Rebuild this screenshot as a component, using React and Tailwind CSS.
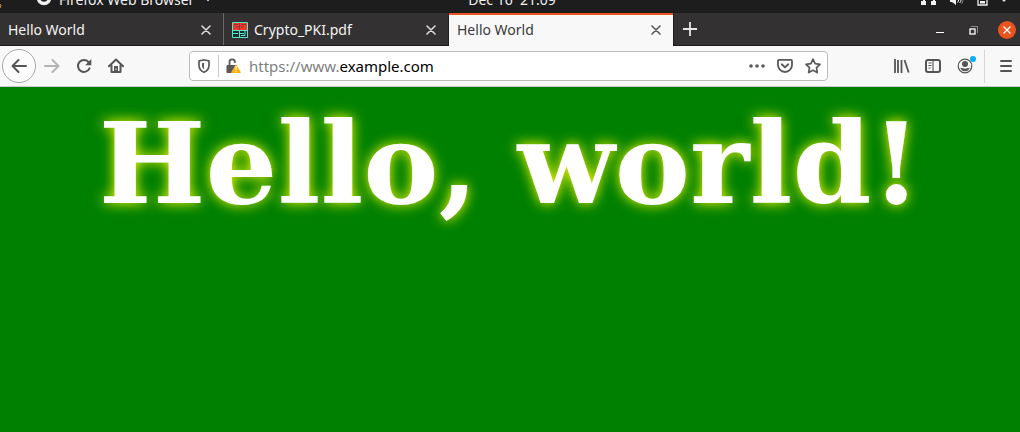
import React from "react";

function CloseGlyph() {
  return (
    <svg width="10" height="10" viewBox="0 0 10 10" fill="none" stroke="currentColor" strokeWidth="1.6" strokeLinecap="round" aria-hidden="true">
      <path d="M1 1l8 8M9 1L1 9" />
    </svg>
  );
}

function PdfFavicon() {
  return (
    <svg width="16" height="16" viewBox="0 0 16 16" aria-hidden="true">
      <rect width="16" height="16" fill="#16302f" />
      <rect x="1" y="1" width="14" height="7" fill="#ef3a2d" />
      <path d="M2 2.500h4M3 5h4M9 2.500h5M9 5h3M7.500 1v7" stroke="#8c3a33" strokeWidth="1" fill="none" />
      <path d="M.5 .5h15v15H.5zM1 8.500h14M7.500 9v6M1 11.500h5M8 11.500h4M13 9v4.500H9" stroke="#5fe3c8" strokeWidth="1" fill="none" />
    </svg>
  );
}

function SystemBar() {
  return (
    <div className="flex h-[13px] items-end justify-between overflow-hidden bg-[#1d1d1d] text-[14px] leading-5 text-[#f0f0f0]">
      <div className="flex w-1/3 items-end pb-[3px]">
        <svg className="mr-9 shrink-0" width="2" height="12" viewBox="0 0 2 12" aria-hidden="true">
          <path d="M0 6q2 1 0 4" stroke="#e8963c" fill="none" />
        </svg>
        <div className="flex items-end gap-1.5">
          <svg className="mb-1 shrink-0 overflow-visible" width="15" height="15" viewBox="0 0 15 15" aria-hidden="true">
            <circle cx="6" cy="7" r="5.500" stroke="#f0f0f0" strokeWidth="3.500" fill="none" />
          </svg>
          <span className="whitespace-nowrap">Firefox Web Browser</span>
          <svg className="mb-2 ml-1 shrink-0 overflow-visible" width="8" height="5" viewBox="0 0 8 5" aria-hidden="true">
            <path d="M0 0h8L4 4.500z" fill="#d8d8d8" />
          </svg>
        </div>
      </div>
      <span className="whitespace-pre pb-[3px] pl-1">Dec 16  21:09</span>
      <div className="flex w-1/3 items-start justify-end gap-3 self-start pr-3 text-[#f0f0f0]">
        <svg width="16" height="6" viewBox="0 0 16 6" fill="currentColor" aria-hidden="true">
          <path d="M2 0h2v1h1v4H0V1h2zM12 0h2v1h1v4h-5V1h2z" />
        </svg>
        <svg width="16" height="6" viewBox="0 0 16 6" fill="none" stroke="currentColor" aria-hidden="true">
          <path d="M1 0h6v5L3 2H1z" fill="currentColor" stroke="none" />
          <path d="M9.500 0v1l-1 1.500M12 0q0 2-1.500 3" />
          <path d="M14 0q0 2-1.500 4" stroke="#777" />
        </svg>
        <svg width="11" height="6" viewBox="0 0 11 6" fill="none" stroke="currentColor" aria-hidden="true">
          <path d="M1 0v5h9V0" strokeWidth="1.300" />
          <path d="M3 1h5v2.500H3z" fill="currentColor" stroke="none" />
        </svg>
        <svg width="8" height="3" viewBox="0 0 8 3" fill="#d8d8d8" aria-hidden="true">
          <path d="M2 0h4L4 2z" />
        </svg>
      </div>
    </div>
  );
}

function Tab({ title, icon, active, className }) {
  return (
    <div
      className={
        "flex items-center gap-1.5 pl-2 pr-3 " +
        (active ? "border-t-2 border-[#e95420] bg-[#f8f8f8] pb-0.5 text-[#3b3b3b] " : "pt-0.5 text-[#f4f4f4] ") +
        className
      }
    >
      <button role="tab" aria-selected={!!active} className="flex flex-1 items-center gap-1.5 text-left leading-5">
        {icon}
        <span>{title}</span>
      </button>
      <button aria-label={"Close " + title} className={active ? "text-[#555]" : "text-[#dcdcdc]"}>
        <CloseGlyph />
      </button>
    </div>
  );
}

function TabStrip() {
  return (
    <div className="flex h-[33px] border-b border-[#1d1b1c] bg-[#333132] text-[14px]">
      <div role="tablist" className="flex">
        <Tab title="Hello World" className="w-[224px] border-r border-[#6a6869]" />
        <Tab title="Crypto_PKI.pdf" icon={<PdfFavicon />} className="w-[225px] border-r border-[#1f1d1e]" />
        <Tab title="Hello World" active className="-mb-px w-[224px]" />
      </div>
      <button aria-label="New tab" className="border-l border-[#1f1d1e] pl-[9px] text-[#e6e6e6]">
        <svg width="14" height="14" viewBox="0 0 14 14" fill="none" stroke="currentColor" strokeWidth="1.800" aria-hidden="true">
          <path d="M7 0v14M0 7h14" />
        </svg>
      </button>
      <div className="ml-auto flex items-center pr-1 pt-0.5 text-white">
        <button aria-label="Minimize" className="mr-[25px]">
          <svg width="8" height="10" viewBox="0 0 8 10" aria-hidden="true">
            <path d="M0 7.500h8" stroke="currentColor" />
          </svg>
        </button>
        <button aria-label="Restore" className="mr-5">
          <svg width="9" height="9" viewBox="0 0 9 9" fill="none" aria-hidden="true">
            <path d="M2 .5h6.500V7" stroke="#8b898a" />
            <rect x="1" y="3" width="5" height="5" stroke="currentColor" strokeWidth="1.300" />
          </svg>
        </button>
        <button aria-label="Close window" className="flex size-[18px] items-center justify-center rounded-full bg-[#e95420]">
          <svg width="8" height="8" viewBox="0 0 8 8" stroke="currentColor" strokeWidth="1.300" aria-hidden="true">
            <path d="M.5 .5l7 7M7.500 .5l-7 7" />
          </svg>
        </button>
      </div>
    </div>
  );
}

function Glyph({ children, className = "" }) {
  return (
    <svg
      className={"shrink-0 overflow-visible " + className}
      width="16"
      height="16"
      viewBox="0 0 16 16"
      fill="none"
      stroke="currentColor"
      strokeWidth="2"
      strokeLinecap="round"
      strokeLinejoin="round"
      aria-hidden="true"
    >
      {children}
    </svg>
  );
}

function AddressBar() {
  return (
    <div className="flex h-[30px] w-[639px] items-center rounded-[4px] border border-[#bdbdbd] bg-white px-1.5 text-[#595959]">
      <button aria-label="Tracking protection">
        <Glyph>
          <path d="M8 1.800C6.500 2.300 4.800 2.800 3 2.900V7c0 3.500 1.800 6 5 7.300 3.200-1.300 5-3.800 5-7.300V2.900C11.200 2.800 9.500 2.300 8 1.800z" strokeWidth="1.700" />
          <path d="M8 4.800v6.500C6.500 10.300 6 8.700 6 7V5.200z" fill="currentColor" stroke="none" />
        </Glyph>
      </button>
      <span className="mx-1.5 h-[22px] w-px bg-[#c8c8c8]" />
      <button aria-label="Connection not secure">
        <Glyph>
          <path d="M4.500 6.500V4.200a2.700 2.700 0 0 1 5.400-.4v.4" strokeWidth="1.800" />
          <path d="M2.500 7h8.500L6.500 15H2.500a1 1 0 0 1-1-1V8a1 1 0 0 1 1-1z" fill="currentColor" stroke="none" />
          <path d="M11 7.400l4 7H7z" fill="#ffad0d" stroke="#ffad0d" strokeWidth="1.400" />
          <path d="M11 8.500v3.200M11 13.600v.2" stroke="#fff" strokeWidth="1.200" />
        </Glyph>
      </button>
      <div className="relative ml-2 flex-1 text-[15px] leading-5">
        <div aria-hidden="true" className="whitespace-nowrap text-[#808080]">
          https://www.<span className="text-black">example.com</span>
        </div>
        <input
          aria-label="Address"
          defaultValue="https://www.example.com"
          className="absolute inset-0 w-full bg-transparent text-transparent outline-none"
        />
      </div>
      <div className="flex items-center gap-3">
        <button aria-label="Page actions">
          <Glyph>
            <path d="M2 8h.01M8 8h.01M14 8h.01" strokeWidth="3.600" />
          </Glyph>
        </button>
        <button aria-label="Save to Pocket">
          <Glyph>
            <path d="M2 1.900h12a1 1 0 0 1 1 1V7A7 7 0 0 1 1 7V2.900a1 1 0 0 1 1-1z" strokeWidth="1.800" />
            <path d="M4.800 6.300L8 9.400l3.200-3.100" strokeWidth="1.900" />
          </Glyph>
        </button>
        <button aria-label="Bookmark this page">
          <Glyph>
            <path d="M8 1.200l2.100 4.400 4.900.7-3.500 3.400.8 4.900L8 12.300l-4.300 2.300.8-4.900L1 6.300l4.900-.7z" strokeWidth="1.700" />
          </Glyph>
        </button>
      </div>
    </div>
  );
}

function Toolbar() {
  return (
    <div className="flex h-[41px] items-center justify-between border-b border-[#c9c9c9] bg-[#f8f8f8] text-[#555]">
      <div className="flex w-[189px] items-center pl-[2px]">
        <button aria-label="Back" className="flex size-[34px] items-center justify-center rounded-full border border-[#a8a8a8] bg-[#fcfcfc]">
          <Glyph>
            <path d="M15 8H1.500M7.500 2L1.500 8l6 6" />
          </Glyph>
        </button>
        <div className="flex items-center gap-4 pl-2">
          <button aria-label="Forward" disabled className="text-[#b4b4b4]">
            <Glyph>
              <path d="M1 8h13.500M8.500 2l6 6-6 6" />
            </Glyph>
          </button>
          <button aria-label="Reload">
            <Glyph>
              <path d="M12.800 4.300A6 6 0 1 0 13.500 10.300" />
              <path d="M15.300 1v6.300H9.200z" fill="currentColor" stroke="none" />
            </Glyph>
          </button>
          <button aria-label="Home">
            <Glyph>
              <path d="M1 8.200L8 1.500l7 6.700" />
              <path d="M3.500 7.500V14h9V7.500" />
              <path d="M6 8h4v6H6z" fill="currentColor" stroke="none" />
              <path d="M8 10.500v1.500" stroke="#f8f8f8" strokeWidth="1" strokeLinecap="butt" />
            </Glyph>
          </button>
        </div>
      </div>
      <AddressBar />
      <div className="flex w-[192px] items-center justify-end pr-1.5">
        <div className="flex items-center gap-4 pr-[11px]">
          <button aria-label="Library">
            <Glyph>
              <path d="M2 1v14M5 2v13M8.500 2v13M11.500 2l4.200 12.500" strokeWidth="1.800" strokeLinecap="butt" />
            </Glyph>
          </button>
          <button aria-label="Sidebars">
            <Glyph>
              <rect x="1" y="2" width="14" height="12" rx="2" />
              <path d="M8 2v12M3.500 5h3M3.500 7.500h3M3.500 10h2" strokeWidth="1.100" strokeLinecap="butt" />
            </Glyph>
          </button>
          <button aria-label="Account">
            <Glyph>
              <circle cx="8" cy="8" r="6.800" strokeWidth="1.200" />
              <circle cx="8" cy="6" r="3" fill="currentColor" stroke="none" />
              <path d="M3.200 9.800q1.500.5 2.300.3Q8 11.500 10.500 10.100q.8.200 2.300-.3Q11.500 13.300 8 13.300T3.200 9.800z" fill="currentColor" stroke="none" />
              <circle cx="16" cy="1" r="3" fill="#00adff" stroke="none" />
            </Glyph>
          </button>
        </div>
        <span className="h-[33px] w-px bg-[#d6d6d6]" />
        <button aria-label="Open menu" className="ml-[13px]">
          <Glyph>
            <path d="M3 3h10M3 8h10M3 13h10" />
          </Glyph>
        </button>
      </div>
    </div>
  );
}

export default function App() {
  return (
    <div className="flex min-h-screen flex-col bg-[#008000] font-['Noto_Sans',sans-serif]">
      <header>
        <SystemBar />
        <TabStrip />
        <Toolbar />
      </header>
      <main className="flex-1 pt-2 text-center">
        <h1 className="font-['DejaVu_Serif',serif] text-[113px] font-bold leading-[138px] text-white [text-shadow:0_0_13px_#ffff00]">
          Hello, world!
        </h1>
      </main>
    </div>
  );
}
